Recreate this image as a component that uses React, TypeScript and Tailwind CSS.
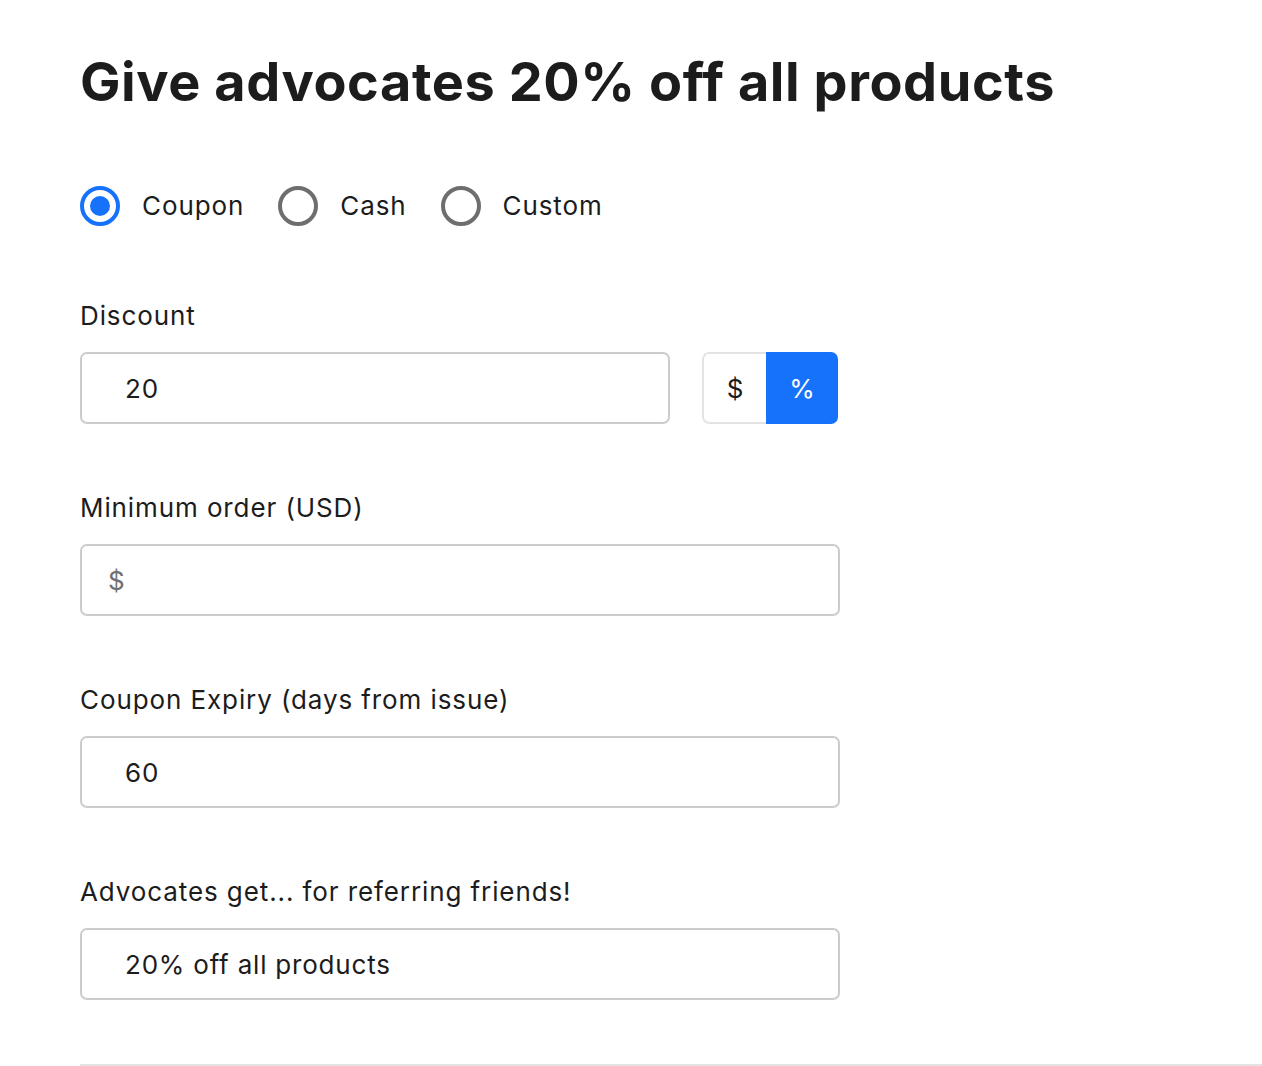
import React from "react";

function Radio({ label, checked }: { label: string; checked?: boolean }) {
  return (
    <label className="flex items-center gap-[22px]">
      {checked ? (
        <span className="flex h-[40px] w-[40px] items-center justify-center rounded-full border-[4px] border-[#1672fa]">
          <span className="h-[20px] w-[20px] rounded-full bg-[#1672fa]" />
        </span>
      ) : (
        <span className="h-[40px] w-[40px] rounded-full border-[4px] border-[#6e6e6e]" />
      )}
      <span className="text-[26px] leading-[32px] tracking-[0.9px] text-[#1c1c1c]">{label}</span>
    </label>
  );
}

function Field({ label, children, mt }: { label: string; children: React.ReactNode; mt: string }) {
  return (
    <div className={mt}>
      <div className="text-[26px] leading-[32px] tracking-[0.9px] text-[#1c1c1c]">{label}</div>
      <div className="mt-[20px]">{children}</div>
    </div>
  );
}

function Input({ value, prefix, className }: { value?: string; prefix?: string; className?: string }) {
  return (
    <div
      className={
        "flex h-[72px] items-center rounded-[7px] border-2 border-[#cccccc] bg-white text-[26px] tracking-[0.8px] text-[#1c1c1c] " +
        (className ?? "w-[760px]")
      }
    >
      {prefix ? (
        <span className="pl-[26px] text-[#707070]">{prefix}</span>
      ) : (
        <span className="pl-[43px]">{value}</span>
      )}
    </div>
  );
}

export default function App() {
  return (
    <div className="min-h-[1066px] bg-white pl-[80px] pt-[50px]" style={{ fontFamily: "Inter, 'Noto Sans', sans-serif" }}>
      <h1 className="text-[54px] font-bold leading-[64px] tracking-[0.57px] text-[#1c1c1c]">
        Give advocates 20% off all products
      </h1>
      <div className="mt-[72px] flex items-center gap-[34px]">
        <Radio label="Coupon" checked />
        <Radio label="Cash" />
        <Radio label="Custom" />
      </div>

      <Field label="Discount" mt="mt-[74px]">
        <div className="flex items-center gap-[32px]">
          <Input value="20" className="w-[590px]" />
          <div className="flex h-[72px] w-[136px] overflow-hidden rounded-[7px] text-[26px]">
            <div className="flex w-[64px] items-center justify-center rounded-l-[7px] border-2 border-r-0 border-[#e3e3e3] text-[#1c1c1c]">
              $
            </div>
            <div className="flex flex-1 items-center justify-center bg-[#1672fa] text-white">%</div>
          </div>
        </div>
      </Field>

      <Field label="Minimum order (USD)" mt="mt-[68px]">
        <Input prefix="$" />
      </Field>

      <Field label="Coupon Expiry (days from issue)" mt="mt-[68px]">
        <Input value="60" />
      </Field>

      <Field label="Advocates get... for referring friends!" mt="mt-[68px]">
        <Input value="20% off all products" />
      </Field>

      <div className="mt-[64px] h-[2px] bg-[#e3e3e3]" />
    </div>
  );
}
